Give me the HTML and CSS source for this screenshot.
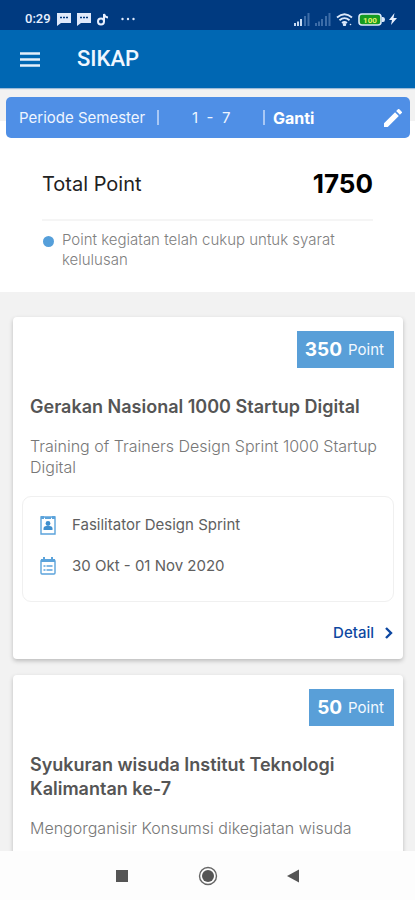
FILE: index.html
```html
<!DOCTYPE html>
<html lang="id">
<head>
<meta charset="utf-8">
<meta name="viewport" content="width=device-width, initial-scale=1">
<title>SIKAP</title>
<link rel="stylesheet" href="styles.css">
</head>
<body>
<div class="screen">
  <div class="status">
    <div class="status-group">
      <span class="clock">0:29</span>
      <svg width="14" height="13" viewBox="0 0 14 13"><path fill="#dfe9fb" d="M0 0h14v10H4l-4 3z"/><path stroke="#003a80" stroke-width="1.5" stroke-dasharray="2 1" d="M3 4.5h8"/></svg>
      <svg width="14" height="13" viewBox="0 0 14 13"><path fill="#dfe9fb" d="M0 0h14v10H4l-4 3z"/><path stroke="#003a80" stroke-width="1.5" stroke-dasharray="2 1" d="M3 4.5h8"/></svg>
      <svg width="12" height="13" viewBox="0 0 12 13" fill="none" stroke="#e8f0ff" stroke-width="2"><circle cx="4" cy="8.5" r="3"/><path d="M7 9V1c.5 2.200 2 3.300 4 3.500"/></svg>
      <svg class="more" width="14" height="4" viewBox="0 0 14 4" fill="#dfe9fb"><circle cx="1.500" cy="2" r="1.200"/><circle cx="7" cy="2" r="1.200"/><circle cx="12.500" cy="2" r="1.200"/></svg>
    </div>
    <div class="status-group status-right">
      <svg width="16" height="13" viewBox="0 0 16 13"><path fill="#c6daf2" d="M0 10h2v3H0zM3 8.500h2V13H3zM6 6h2v7H6z"/><path fill="#3d6da8" d="M10 3h2v10h-2zM13.500 0h2v13h-2z"/></svg>
      <svg width="16" height="13" viewBox="0 0 16 13"><path fill="#3d6da8" d="M0 10h2v3H0zM3 8.500h2V13H3zM6 6h2v7H6zM10 3h2v10h-2zM13.500 0h2v13h-2z"/></svg>
      <svg width="17" height="13" viewBox="0 0 17 13" fill="none" stroke="#dce9fb" stroke-width="1.800"><path d="M1 4.500q7.500-6.500 15 0M3.500 7.300q5-4.300 10 0M6 10q2.500-2 5 0"/><circle cx="8.500" cy="11.500" r=".8" fill="#dce9fb"/><circle cx="14.500" cy="11.500" r=".8" fill="#dce9fb" stroke="none"/></svg>
      <svg width="27" height="13" viewBox="0 0 27 13"><rect x="1" y="1" width="22" height="11" rx="3" fill="#159b20" stroke="#dce9fb" stroke-width="1.600"/><path fill="#dce9fb" d="M24 4h1q2 0 2 2.500T25 9h-1z"/><text class="battery" x="12" y="9.500" text-anchor="middle">100</text></svg>
      <svg class="bolt" width="8" height="12" viewBox="0 0 8 12"><path fill="#e8f0ff" d="M5.500 0 0 7h3l-1 5 6-7H4.500z"/></svg>
    </div>
  </div>

  <header class="appbar">
    <button class="icon-button" aria-label="Menu"><svg width="20" height="15" viewBox="0 0 20 15" stroke="#e3f0fb" stroke-width="2.500"><path d="M0 1.500h20M0 7.500h20M0 13.500h20"/></svg></button>
    <h1>SIKAP</h1>
  </header>

  <main class="content">
    <section class="period">
      <span class="period-label">Periode Semester</span>
      <span class="bar"></span>
      <span class="range">1&nbsp; -&nbsp; 7</span>
      <span class="bar"></span>
      <strong>Ganti</strong>
      <button class="icon-button edit" aria-label="Ganti periode"><svg width="18" height="18" viewBox="3 3 18 18" fill="#fff"><path d="M3 17.250V21h3.750L17.810 9.940l-3.750-3.750zM20.710 7.040a1 1 0 0 0 0-1.410l-2.340-2.340a1 1 0 0 0-1.410 0l-1.830 1.830 3.750 3.750z"/></svg></button>
    </section>

    <section class="summary">
      <div class="total"><span>Total Point</span><strong>1750</strong></div>
      <p class="note">Point kegiatan telah cukup untuk syarat kelulusan</p>
    </section>

    <section class="cards">
      <article class="card">
        <div class="badge"><strong>350</strong> Point</div>
        <h2>Gerakan Nasional 1000 Startup Digital</h2>
        <p class="desc">Training of Trainers Design Sprint 1000 Startup Digital</p>
        <div class="info">
          <div class="info-row">
            <svg width="16" height="20" viewBox="0 0 16 20"><path fill="none" stroke="#5ba3db" stroke-width="1.400" d="M1 2h14v17H1z"/><path fill="#5ba3db" d="M1 1h3v3H1zM12 1h3v3h-3zM5 2h6v2H5z"/><circle cx="8" cy="8.500" r="2.400" fill="#3f8fce"/><path fill="#3f8fce" d="M3.500 15v-1.500q0-2.500 3-2.500h3q3 0 3 2.500V15z"/></svg>
            <span>Fasilitator Design Sprint</span>
          </div>
          <div class="info-row">
            <svg width="16" height="18" viewBox="0 0 16 18"><rect x="1" y="3" width="14" height="14" rx="1" fill="none" stroke="#5ba3db" stroke-width="1.400"/><path fill="#5ba3db" d="M1 2h14v3H1zM3 0h2v3H3zM11 0h2v3h-2z"/><path stroke="#5ba3db" stroke-width="1.300" d="M3.500 9h2M6.500 9h6M3.500 13h2M6.500 13h6"/></svg>
            <span>30 Okt&nbsp;-&nbsp;01 Nov 2020</span>
          </div>
        </div>
        <a class="detail" href="#detail">Detail <svg width="8" height="12" viewBox="0 0 8 12" fill="none" stroke="#0d47a1" stroke-width="2.400"><path d="m1 1 5 5-5 5"/></svg></a>
      </article>

      <article class="card">
        <div class="badge"><strong>50</strong> Point</div>
        <h2>Syukuran wisuda Institut Teknologi Kalimantan ke-7</h2>
        <p class="desc">Mengorganisir Konsumsi dikegiatan wisuda</p>
      </article>
    </section>
  </main>

  <nav class="navbar">
    <button class="icon-button" aria-label="Aplikasi terbaru"><svg width="20" height="20" viewBox="0 0 20 20"><path fill="#555" d="M4 4h12v12H4z"/></svg></button>
    <button class="icon-button" aria-label="Beranda"><svg width="20" height="20" viewBox="0 0 20 20"><circle cx="10" cy="10" r="8.500" fill="none" stroke="#666" stroke-width="1.400"/><circle cx="10" cy="10" r="6" fill="#555"/></svg></button>
    <button class="icon-button" aria-label="Kembali"><svg width="20" height="20" viewBox="0 0 20 20"><path fill="#555" d="M15 3.500v13L3 10z"/></svg></button>
  </nav>
</div>
</body>
</html>
```
FILE: styles.css
```css
* { box-sizing: border-box; }

body {
  margin: 0;
  font-family: Inter, "Liberation Sans", sans-serif;
  background: #f2f2f2;
  color: #555;
}

h1, h2, p { margin: 0; }
svg { display: block; flex: none; }

.screen {
  display: flex;
  flex-direction: column;
  height: 100vh;
}

.icon-button {
  display: block;
  padding: 0;
  border: 0;
  background: none;
}

.status {
  display: flex;
  flex: none;
  justify-content: space-between;
  height: 30px;
  padding: 8px 18px 0 25px;
  background: #003a80;
}

.status-group {
  display: flex;
  align-items: center;
  gap: 6px;
  height: 22px;
}

.status-right { gap: 5px; }
.more { margin-left: 6px; }
.bolt { margin-left: -1px; }

.clock {
  color: #e8f0ff;
  font: 500 13px/16px Roboto, sans-serif;
}

.battery {
  fill: #e6f56a;
  font: 700 8px Roboto, sans-serif;
}

.appbar {
  display: flex;
  flex: none;
  align-items: center;
  gap: 37px;
  height: 58px;
  padding: 0 20px;
  background: #0067b3;
  box-shadow: 0 1px 1px #9dbbd8;
  z-index: 1;
}

.appbar h1 {
  color: #f0f7ff;
  font: 500 22px/30px Roboto, sans-serif;
}

.content {
  flex: 1;
  min-height: 0;
  overflow: hidden;
  padding-top: 9px;
}

.period {
  position: relative;
  display: flex;
  align-items: center;
  height: 41px;
  margin: 0 5px -17px 6px;
  padding: 0 8px 0 13px;
  border-radius: 5px;
  background: #4f8fe6;
  color: #eef5ff;
  font-size: 15px;
}

.period-label { flex: 0 0 131px; }

.bar {
  width: 2px;
  height: 15px;
  margin: 0 8px 0 7px;
  background: #a9c8f5;
}

.range {
  flex: 0 0 89px;
  padding-left: 25px;
}

.period strong {
  color: #fff;
  font-size: 16px;
  font-weight: 700;
}

.edit { margin-left: auto; }

.summary {
  padding: 43px 42px 22px;
  background: #fff;
}

.total {
  display: flex;
  align-items: center;
  justify-content: space-between;
  height: 57px;
  padding-bottom: 16px;
  border-bottom: 2px solid #f5f5f5;
  color: #222;
  font-size: 20px;
}

.total strong {
  color: #000;
  font-size: 26px;
}

.note {
  position: relative;
  margin-top: 9px;
  padding-left: 20px;
  color: #808080;
  font-size: 15px;
  font-weight: 300;
  line-height: 20px;
}

.note::before {
  content: "";
  position: absolute;
  top: 6px;
  left: 1px;
  width: 11px;
  height: 11px;
  border-radius: 50%;
  background: #559fda;
}

.cards {
  display: flex;
  flex-direction: column;
  gap: 16px;
  padding: 25px 12px 16px 13px;
}

.card {
  display: flex;
  flex-direction: column;
  min-height: 200px;
  padding: 14px 9px;
  border-radius: 4px;
  background: #fff;
  box-shadow: 0 2px 4px #bbb;
}

.badge {
  display: flex;
  align-items: center;
  align-self: flex-end;
  gap: 6px;
  height: 37px;
  padding: 0 10px 0 8px;
  background: #599fd8;
  color: #f3f9ff;
  font-size: 15px;
}

.badge strong {
  color: #fff;
  font-size: 19px;
}

.card h2 {
  margin: 27px 8px 0;
  color: #555;
  font-size: 18px;
  font-weight: 600;
  line-height: 24px;
}

.desc {
  margin: 17px 8px 0;
  color: #777;
  font-size: 16px;
  font-weight: 300;
  line-height: 21px;
}

.info {
  display: flex;
  flex-direction: column;
  gap: 21px;
  height: 106px;
  margin-top: 18px;
  padding: 18px 17px;
  border: 1px solid #f0f0f0;
  border-radius: 9px;
  color: #606060;
  font-size: 15px;
  line-height: 20px;
}

.info-row {
  display: flex;
  align-items: center;
  gap: 16px;
}

.detail {
  display: flex;
  align-items: center;
  align-self: flex-end;
  gap: 11px;
  margin: 19px 1px 0 0;
  color: #0d47a1;
  font-size: 15px;
  font-weight: 500;
  line-height: 24px;
  text-decoration: none;
}

.navbar {
  display: flex;
  flex: none;
  align-items: center;
  justify-content: center;
  gap: 66px;
  height: 49px;
  background: #fdfdfd;
}
```
